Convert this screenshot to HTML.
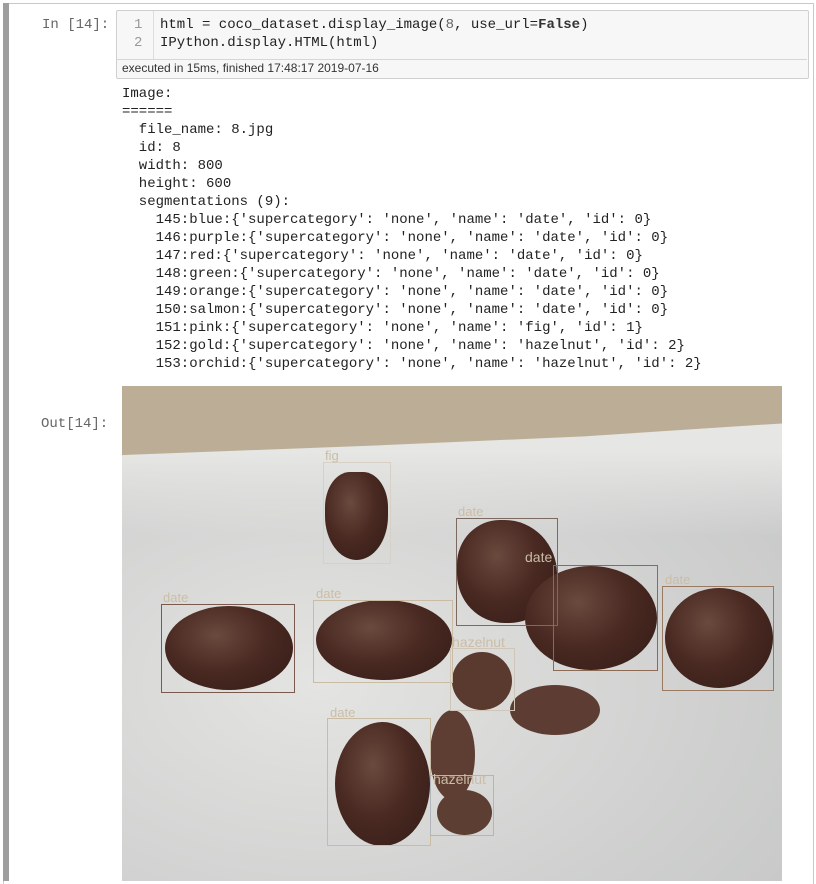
<!DOCTYPE html>
<html><head><meta charset="utf-8"><style>
body{margin:0;width:816px;height:881px;background:#fff;position:relative;overflow:hidden;font-family:"Liberation Mono",monospace;}
.a{position:absolute}
.mono{font-family:"Liberation Mono",monospace;font-size:14px;line-height:18px;color:#222;white-space:pre}
.ob{position:absolute;border-radius:50%;background:radial-gradient(ellipse at 40% 35%,#6a4a3e 0%,#4a2a22 45%,#321a16 100%)}
.bx{position:absolute;border:1px solid #c9bba4}
.lb{position:absolute;font-family:"Liberation Sans",sans-serif;font-size:13px;color:#cbbda6}
</style></head><body>
<div class="a" style="left:3px;top:3px;width:809px;height:880px;border:1px solid #c8c8c8;border-bottom:none"></div>
<div class="a" style="left:3px;top:3px;width:6px;height:878px;background:#9e9e9e"></div>
<div class="a mono" style="left:42px;top:16px;color:#666">In [14]:</div>
<div class="a" style="left:116px;top:10px;width:691px;height:67px;border:1px solid #cfcfcf;background:#f7f7f7;border-radius:2px"></div>
<div class="a" style="left:153px;top:11px;width:1px;height:48px;background:#ddd"></div>
<div class="a" style="left:117px;top:59px;width:690px;height:1px;background:#d6d6d6"></div>
<div class="a mono" style="left:134px;top:16px;color:#999">1
2</div>
<div class="a mono" style="left:160px;top:16px">html = coco_dataset.display_image(<span style="color:#666">8</span>, use_url=<b style="color:#333">False</b>)
IPython.display.HTML(html)</div>
<div class="a" style="left:122px;top:61px;font-family:'Liberation Sans',sans-serif;font-size:12px;color:#333">executed in 15ms, finished 17:48:17 2019-07-16</div>
<div class="a mono" style="left:122px;top:85px">Image:
======
  file_name: 8.jpg
  id: 8
  width: 800
  height: 600
  segmentations (9):
    145:blue:{'supercategory': 'none', 'name': 'date', 'id': 0}
    146:purple:{'supercategory': 'none', 'name': 'date', 'id': 0}
    147:red:{'supercategory': 'none', 'name': 'date', 'id': 0}
    148:green:{'supercategory': 'none', 'name': 'date', 'id': 0}
    149:orange:{'supercategory': 'none', 'name': 'date', 'id': 0}
    150:salmon:{'supercategory': 'none', 'name': 'date', 'id': 0}
    151:pink:{'supercategory': 'none', 'name': 'fig', 'id': 1}
    152:gold:{'supercategory': 'none', 'name': 'hazelnut', 'id': 2}
    153:orchid:{'supercategory': 'none', 'name': 'hazelnut', 'id': 2}</div>
<div class="a mono" style="left:41px;top:415px;color:#666">Out[14]:</div>
<div class="a" style="left:122px;top:386px;width:660px;height:495px;overflow:hidden;background:radial-gradient(ellipse at 30% 60%,#e4e4e2 0%,#cfd0cf 60%,#c4c6c5 100%)">
<div class="a" style="left:0;top:30px;width:660px;height:120px;background:linear-gradient(180deg,#e6e6e4 30%,transparent)"></div>
<div class="a" style="left:0;top:0;width:660px;height:72px;background:#bcae96;clip-path:polygon(0 0,100% 0,100% 52%,70% 70%,40% 82%,0 96%)"></div>
</div>
<div class="ob" style="left:325px;top:472px;width:63px;height:88px;border-radius:40% 40% 50% 50%"></div>
<div class="ob" style="left:165px;top:606px;width:128px;height:84px"></div>
<div class="ob" style="left:316px;top:600px;width:136px;height:80px"></div>
<div class="ob" style="left:457px;top:520px;width:100px;height:103px;border-radius:45% 55% 50% 50%"></div>
<div class="ob" style="left:525px;top:566px;width:132px;height:104px"></div>
<div class="ob" style="left:665px;top:588px;width:108px;height:100px"></div>
<div class="ob" style="left:335px;top:722px;width:95px;height:124px"></div>
<div class="ob" style="left:452px;top:652px;width:60px;height:58px;background:#5a3a2e"></div>
<div class="ob" style="left:437px;top:790px;width:55px;height:45px;background:#5c3e32"></div>
<div class="ob" style="left:510px;top:685px;width:90px;height:50px;background:#5d3d33"></div>
<div class="ob" style="left:430px;top:710px;width:45px;height:90px;background:#5e3e32"></div>
<div class="bx" style="left:323px;top:462px;width:66px;height:100px;border-color:#d8d0c4"></div>
<div class="bx" style="left:456px;top:518px;width:100px;height:106px;border-color:#7b6a60"></div>
<div class="bx" style="left:553px;top:565px;width:103px;height:104px;border-color:#8c6a55"></div>
<div class="bx" style="left:662px;top:586px;width:110px;height:103px;border-color:#9a7a60"></div>
<div class="bx" style="left:161px;top:604px;width:132px;height:87px;border-color:#7a5a4e"></div>
<div class="bx" style="left:313px;top:600px;width:138px;height:81px"></div>
<div class="bx" style="left:450px;top:648px;width:63px;height:61px;border-color:#d0c6b8"></div>
<div class="bx" style="left:327px;top:718px;width:102px;height:126px"></div>
<div class="bx" style="left:430px;top:775px;width:62px;height:59px;border-color:#b0b6bc"></div>
<div class="lb" style="left:525px;top:549px;font-size:14px">date</div>
<div class="lb" style="left:452px;top:634px;font-size:14px">hazelnut</div>
<div class="lb" style="left:433px;top:771px;font-size:14px">hazelnut</div>
<div class="lb" style="left:163px;top:590px">date</div>
<div class="lb" style="left:316px;top:586px">date</div>
<div class="lb" style="left:458px;top:504px">date</div>
<div class="lb" style="left:665px;top:572px">date</div>
<div class="lb" style="left:330px;top:705px">date</div>
<div class="lb" style="left:325px;top:448px">fig</div>
</body></html>
